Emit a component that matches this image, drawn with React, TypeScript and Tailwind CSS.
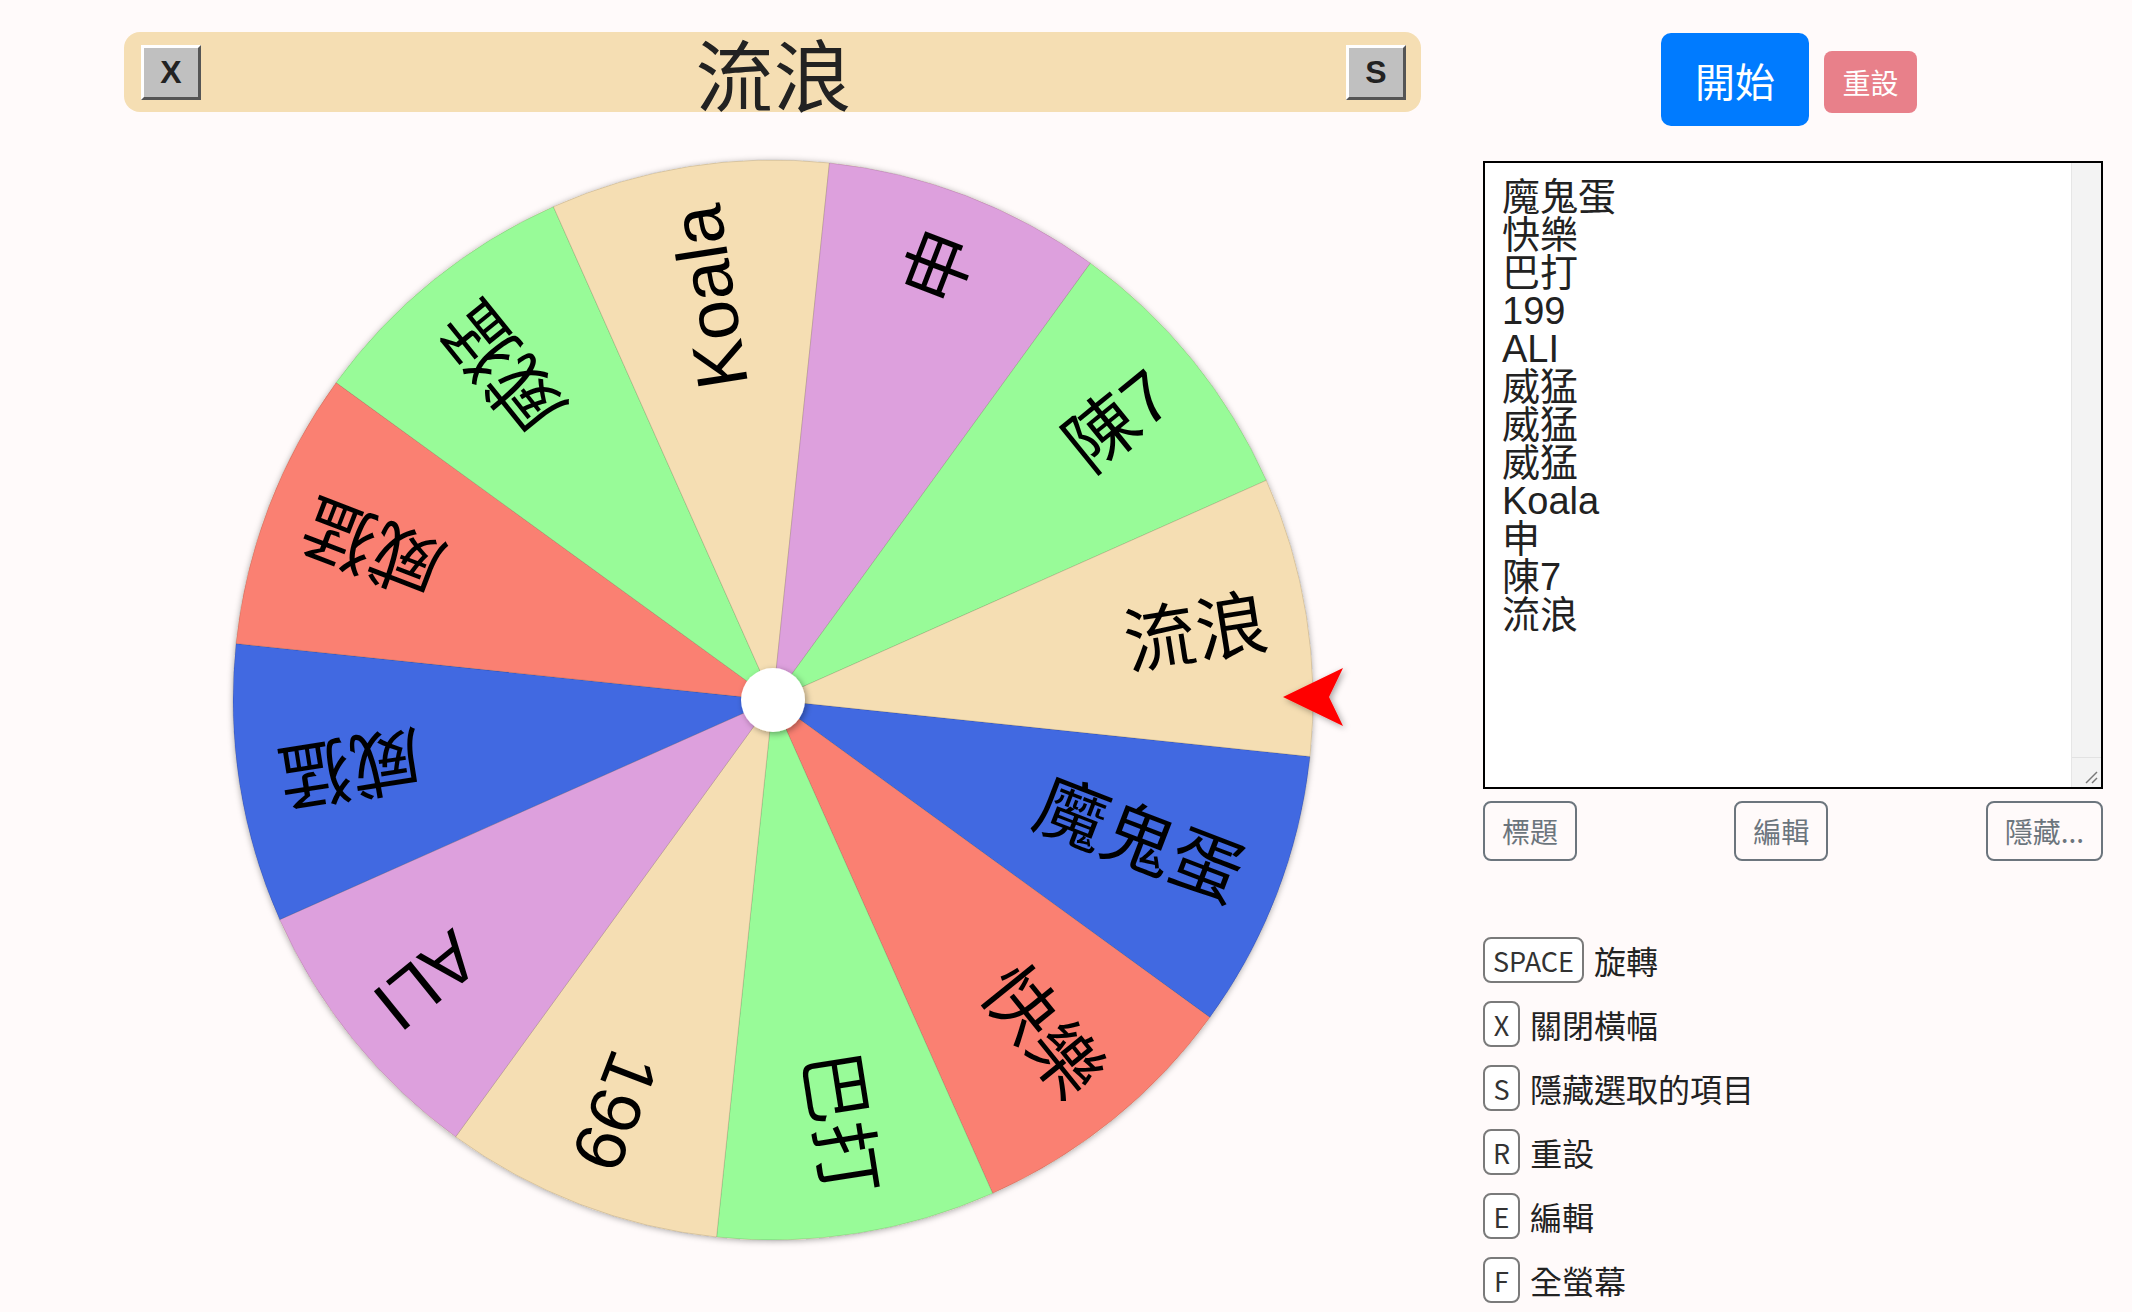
import React from "react";

const items = [
  { t: "魔鬼蛋", c: "#4169e1" },
  { t: "快樂", c: "#fa8072" },
  { t: "巴打", c: "#98fb98" },
  { t: "199", c: "#f5deb3" },
  { t: "ALI", c: "#dda0dd" },
  { t: "威猛", c: "#4169e1" },
  { t: "威猛", c: "#fa8072" },
  { t: "威猛", c: "#98fb98" },
  { t: "Koala", c: "#f5deb3" },
  { t: "申", c: "#dda0dd" },
  { t: "陳7", c: "#98fb98" },
  { t: "流浪", c: "#f5deb3" },
];

const R = 540;
const rad = (d: number) => (d * Math.PI) / 180;

function Wheel() {
  const n = items.length;
  const step = 360 / n;
  const offset = 6;
  return (
    <svg width={1200} height={1120} viewBox="-560 -560 1200 1120" className="block overflow-visible">
      <defs>
        <filter id="wsh" x="-10%" y="-10%" width="120%" height="120%">
          <feDropShadow dx="0" dy="1" stdDeviation="3" floodColor="#000" floodOpacity="0.35" />
        </filter>
        <filter id="csh" x="-50%" y="-50%" width="200%" height="200%">
          <feDropShadow dx="2" dy="2" stdDeviation="3" floodColor="#000" floodOpacity="0.35" />
        </filter>
      </defs>
      <g filter="url(#wsh)">
        <circle cx={0} cy={0} r={R} fill="#f5deb3" />
      </g>
      {items.map((it, i) => {
        const a0 = offset + i * step;
        const a1 = a0 + step;
        const x0 = R * Math.cos(rad(a0));
        const y0 = R * Math.sin(rad(a0));
        const x1 = R * Math.cos(rad(a1));
        const y1 = R * Math.sin(rad(a1));
        return (
          <path
            key={"p" + i}
            d={`M0,0 L${x0},${y0} A${R},${R} 0 0 1 ${x1},${y1} Z`}
            fill={it.c}
            stroke="rgba(0,0,0,0.12)"
            strokeWidth={1}
          />
        );
      })}
      {items.map((it, i) => {
        const a = offset + i * step + step / 2;
        return (
          <text
            key={"t" + i}
            transform={`rotate(${a})`}
            x={500}
            y={0}
            textAnchor="end"
            dominantBaseline="central"
            fontSize={72}
            fill="#000"
            fontFamily="'Liberation Sans', 'Noto Sans CJK TC', sans-serif"
          >
            {it.t}
          </text>
        );
      })}
      <circle cx={0} cy={0} r={32} fill="#fff" filter="url(#csh)" />
      <polygon
        points="510,-3 570,-32 556,-3 570,26"
        fill="#ff0000"
        filter="url(#csh)"
      />
    </svg>
  );
}

function Key({ k }: { k: string }) {
  return (
    <div className="h-[46px] min-w-[37px] px-[8px] flex items-center justify-center border-2 border-[#7a7a7a] rounded-[8px] bg-white text-[27px] text-[#333] leading-none">
      {k}
    </div>
  );
}

const shortcuts = [
  { k: "SPACE", l: "旋轉" },
  { k: "X", l: "關閉橫幅" },
  { k: "S", l: "隱藏選取的項目" },
  { k: "R", l: "重設" },
  { k: "E", l: "編輯" },
  { k: "F", l: "全螢幕" },
];

export default function App() {
  return (
    <div className="w-[2132px] h-[1312px] overflow-hidden bg-[#fffafa] flex font-['Noto_Sans_CJK_TC',sans-serif] text-[#222]">
      <div className="w-[1483px] shrink-0 flex flex-col">
        <div className="mt-[32px] ml-[124px] w-[1297px] h-[80px] rounded-[16px] bg-[#f5deb3] flex items-center justify-between pl-[17px] pr-[15px]">
          <div className="w-[60px] h-[55px] bg-[#c0c0c0] border-[3px] border-t-white border-l-white border-r-[#555] border-b-[#555] flex items-center justify-center font-['Liberation_Sans',sans-serif] font-bold text-[32px] text-[#222] leading-none">
            X
          </div>
          <div className="text-[78px] leading-none text-[#222] font-['Noto_Sans_CJK_TC',sans-serif]">流浪</div>
          <div className="w-[60px] h-[55px] bg-[#c0c0c0] border-[3px] border-t-white border-l-white border-r-[#555] border-b-[#555] flex items-center justify-center font-['Liberation_Sans',sans-serif] font-bold text-[32px] text-[#222] leading-none">
            S
          </div>
        </div>
        <div className="mt-[28px] ml-[213px]">
          <Wheel />
        </div>
      </div>
      <div className="w-[620px] shrink-0 flex flex-col">
        <div className="mt-[33px] h-[93px] flex items-center justify-center gap-[15px] pr-[8px]">
          <div className="w-[148px] h-[93px] rounded-[10px] bg-[#007bff] text-white text-[40px] leading-none flex items-center justify-center">
            開始
          </div>
          <div className="w-[93px] h-[62px] rounded-[8px] bg-[#e8808a] text-white text-[28px] leading-none flex items-center justify-center mt-[4px]">
            重設
          </div>
        </div>
        <div className="mt-[35px] h-[628px] border-2 border-black bg-white flex">
          <div className="flex-1 pt-[15px] pl-[17px] text-[38px] leading-[38px] text-[#222] whitespace-pre font-['Liberation_Sans','Noto_Sans_CJK_TC',sans-serif]">
            {items.map((it) => it.t).join("\n")}
          </div>
          <div className="w-[30px] bg-[#f3f3f3] border-l border-[#e6e6e6] flex flex-col justify-end">
            <div className="h-[30px] border-t border-[#e2e2e2] flex items-end justify-end p-[3px]">
              <svg width="14" height="14" viewBox="0 0 14 14">
                <line x1="2" y1="13" x2="13" y2="2" stroke="#777" strokeWidth="1.5" />
                <line x1="8" y1="13" x2="13" y2="8" stroke="#777" strokeWidth="1.5" />
              </svg>
            </div>
          </div>
        </div>
        <div className="mt-[12px] flex justify-between">
          {["標題", "編輯", "隱藏..."].map((b) => (
            <div
              key={b}
              className="h-[60px] px-[17px] border-2 border-[#6c757d] rounded-[8px] text-[#6c757d] text-[28px] leading-none flex items-center justify-center"
            >
              {b}
            </div>
          ))}
        </div>
        <div className="mt-[76px] flex flex-col gap-[18px]">
          {shortcuts.map((s) => (
            <div key={s.k} className="flex items-center gap-[10px]">
              <Key k={s.k} />
              <div className="text-[32px] leading-none text-[#222]">{s.l}</div>
            </div>
          ))}
        </div>
      </div>
    </div>
  );
}
